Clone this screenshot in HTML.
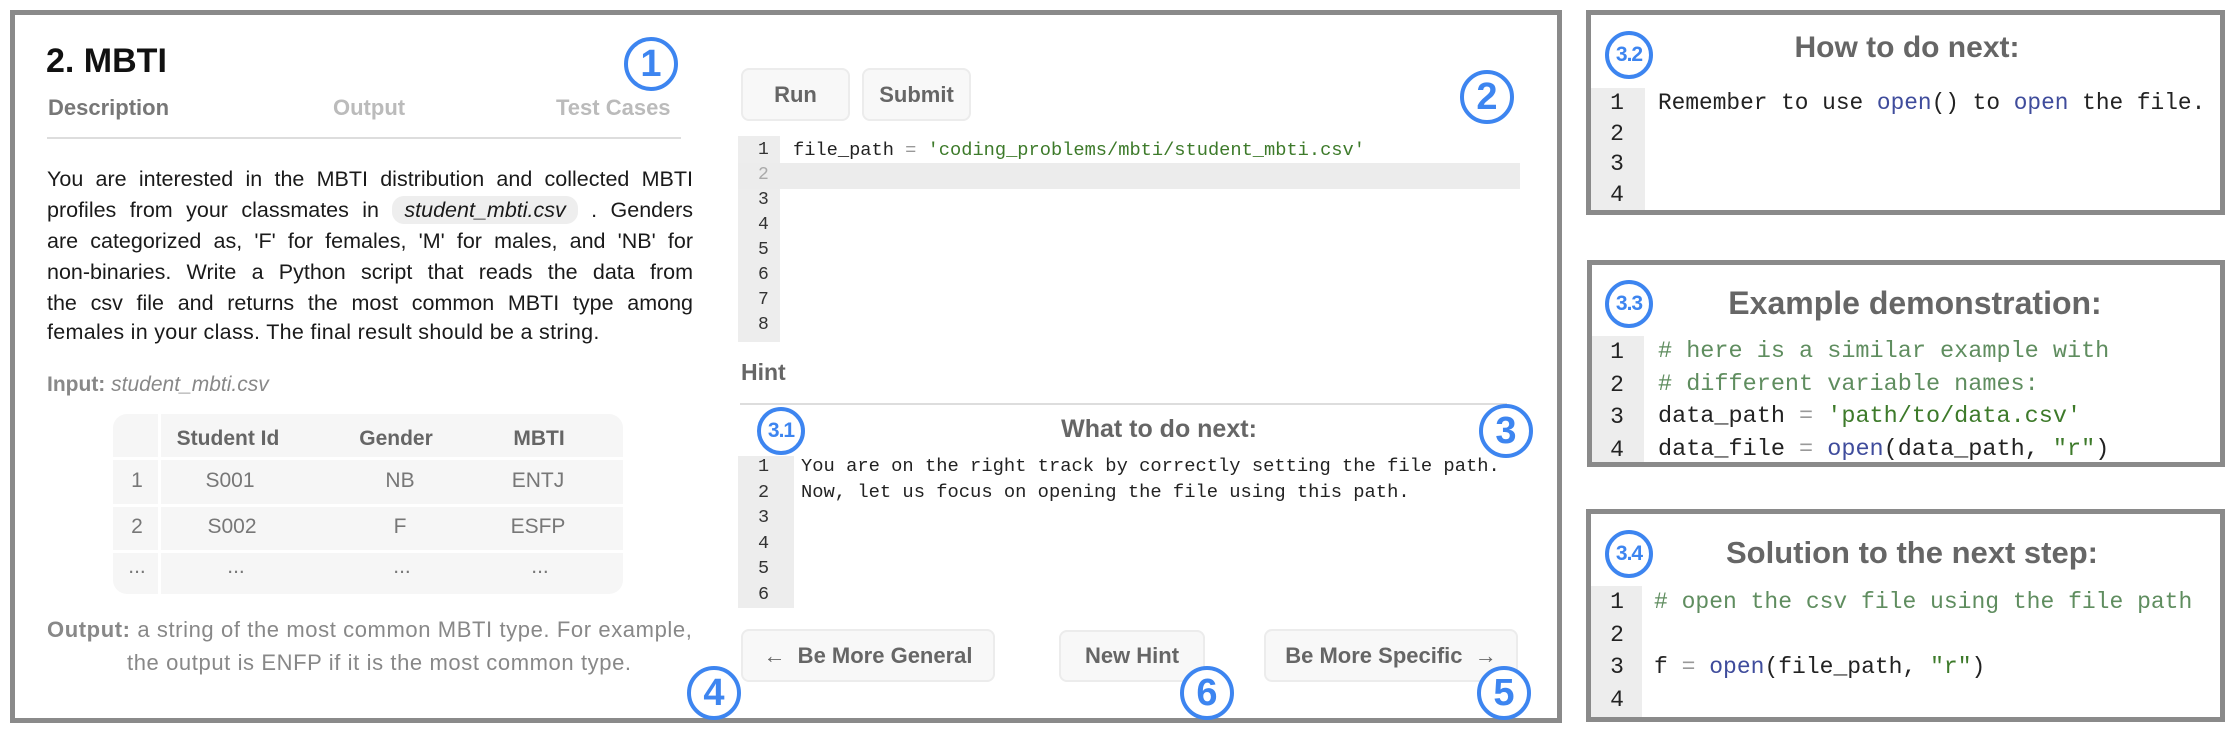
<!DOCTYPE html>
<html><head><meta charset="utf-8"><style>
*{margin:0;padding:0;box-sizing:border-box}
body{width:2240px;height:740px;background:#fff;position:relative;overflow:hidden;font-family:"Liberation Sans",sans-serif}
.a{position:absolute}
.box{position:absolute;border:5px solid #8a8a8a}
.c{position:absolute;border:4px solid #3d85f0;border-radius:50%;color:#3d85f0;font-weight:bold;display:flex;align-items:center;justify-content:center;background:transparent}
.big{width:54px;height:54px;font-size:38px}
.sm{width:48px;height:48px;font-size:21px;letter-spacing:-1px;background:#fff}
.p{position:absolute;left:47px;width:646px;font-size:21.5px;color:#1a1a1a;text-align:justify;text-align-last:justify;white-space:nowrap}
.btn{position:absolute;background:#f8f8f8;border:2px solid #ececec;border-radius:8px;color:#666;font-weight:bold;font-size:22px;display:flex;align-items:center;justify-content:center}
.gut{position:absolute;background:#ededed}
.ln{position:absolute;font-family:"Liberation Mono",monospace;color:#222}
.th{position:absolute;font-weight:bold;font-size:21px;color:#666;transform:translateX(-50%)}
.td{position:absolute;font-size:21px;color:#777;transform:translateX(-50%)}
.tt{position:absolute;font-weight:bold;color:#666;transform:translateX(-50%);white-space:nowrap}
.cm{color:#5f8d5f}.st{color:#3d7a2a}.kw{color:#3f4c9c}.op{color:#999}
</style></head><body>
<div class="box" style="left:10px;top:10px;width:1552px;height:713px"></div>

<div class="a" style="left:46px;top:42px;font-size:34px;font-weight:bold;color:#111">2. MBTI</div>
<div class="c big" style="left:624px;top:37px">1</div>
<div class="a" style="left:48px;top:95px;font-size:22px;font-weight:bold;color:#777">Description</div>
<div class="a" style="left:333px;top:95px;font-size:22px;font-weight:bold;color:#bbb">Output</div>
<div class="a" style="left:556px;top:95px;font-size:22px;font-weight:bold;color:#bbb">Test Cases</div>
<div class="a" style="left:47px;top:137px;width:634px;height:2px;background:#ddd"></div>

<div class="p" style="top:167px">You are interested in the MBTI distribution and collected MBTI</div>
<div class="p" style="top:198px">profiles from your classmates in <span style="background:#eee;border-radius:12px;padding:2px 12px;font-style:italic">student_mbti.csv</span> . Genders</div>
<div class="p" style="top:229px">are categorized as, 'F' for females, 'M' for males, and 'NB' for</div>
<div class="p" style="top:260px">non-binaries. Write a Python script that reads the data from</div>
<div class="p" style="top:291px">the csv file and returns the most common MBTI type among</div>
<div class="p" style="top:320px;text-align-last:left;letter-spacing:0.3px">females in your class. The final result should be a string.</div>

<div class="a" style="left:47px;top:373px;font-size:21px;color:#888"><b>Input:</b> <i>student_mbti.csv</i></div>
<div class="a" style="left:113px;top:414px;width:510px;height:180px;background:#f6f6f6;border-radius:14px;overflow:hidden">
 <div class="a" style="left:45px;top:0;width:3px;height:180px;background:#fff"></div>
 <div class="a" style="left:0;top:43px;width:510px;height:3px;background:#fff"></div>
 <div class="a" style="left:0;top:90px;width:510px;height:3px;background:#fff"></div>
 <div class="a" style="left:0;top:136px;width:510px;height:3px;background:#fff"></div>
</div>
<div class="th" style="left:228px;top:427px">Student Id</div>
<div class="th" style="left:396px;top:427px">Gender</div>
<div class="th" style="left:539px;top:427px">MBTI</div>
<div class="td" style="left:137px;top:469px">1</div><div class="td" style="left:230px;top:469px">S001</div><div class="td" style="left:400px;top:469px">NB</div><div class="td" style="left:538px;top:469px">ENTJ</div>
<div class="td" style="left:137px;top:515px">2</div><div class="td" style="left:232px;top:515px">S002</div><div class="td" style="left:400px;top:515px">F</div><div class="td" style="left:538px;top:515px">ESFP</div>
<div class="td" style="left:137px;top:555px">...</div><div class="td" style="left:236px;top:555px">...</div><div class="td" style="left:402px;top:555px">...</div><div class="td" style="left:540px;top:555px">...</div>
<div class="a" style="left:47px;top:617px;font-size:22px;letter-spacing:0.6px;color:#888"><b>Output:</b> a string of the most common MBTI type. For example,</div>
<div class="a" style="left:127px;top:650px;font-size:22px;letter-spacing:0.6px;color:#888">the output is ENFP if it is the most common type.</div>

<div class="btn" style="left:741px;top:68px;width:109px;height:53px">Run</div>
<div class="btn" style="left:862px;top:68px;width:109px;height:53px">Submit</div>
<div class="c big" style="left:1460px;top:70px">2</div>

<div class="gut" style="left:738px;top:136px;width:42px;height:206px"></div>
<div class="a" style="left:738px;top:163px;width:782px;height:26px;background:#ececec"></div>
<div class="ln" style="left:758px;top:138px;font-size:18px;line-height:25px;color:#333">1<br><span style="color:#aaa">2</span><br>3<br>4<br>5<br>6<br>7<br>8</div>
<div class="ln" style="left:793px;top:138px;font-size:18.7px;line-height:25px">file_path <span class="op">=</span> <span class="st">'coding_problems/mbti/student_mbti.csv'</span></div>

<div class="a" style="left:741px;top:359px;font-size:23px;font-weight:bold;color:#666">Hint</div>
<div class="a" style="left:740px;top:403px;width:767px;height:2px;background:#ddd"></div>
<div class="a" style="left:1159px;top:415px;transform:translateX(-50%);font-size:25px;font-weight:bold;color:#666;white-space:nowrap">What to do next:</div>
<div class="gut" style="left:738px;top:456px;width:56px;height:152px"></div>
<div class="ln" style="left:758px;top:454px;font-size:18.5px;line-height:25.5px;color:#333">1<br>2<br>3<br>4<br>5<br>6</div>
<div class="ln" style="left:801px;top:454px;font-size:18.8px;line-height:25.5px">You are on the right track by correctly setting the file path.<br>Now, let us focus on opening the file using this path.</div>
<div class="c sm" style="left:757px;top:407px">3.1</div>
<div class="c big" style="left:1479px;top:404px">3</div>

<div class="btn" style="left:741px;top:629px;width:254px;height:53px">←&nbsp; Be More General</div>
<div class="btn" style="left:1059px;top:630px;width:146px;height:52px">New Hint</div>
<div class="btn" style="left:1264px;top:629px;width:254px;height:53px">Be More Specific&nbsp; →</div>
<div class="c big" style="left:687px;top:666px;background:#fff">4</div>
<div class="c big" style="left:1180px;top:666px;background:#fff">6</div>
<div class="c big" style="left:1477px;top:666px;background:#fff">5</div>

<!-- right boxes -->
<div class="box" style="left:1586px;top:10px;width:639px;height:205px"></div>
<div class="c sm" style="left:1605px;top:31px">3.2</div>
<div class="tt" style="left:1907px;top:31px;font-size:30px">How to do next:</div>
<div class="gut" style="left:1591px;top:88px;width:54px;height:122px"></div>
<div class="ln" style="left:1617px;top:88px;font-size:23px;line-height:30.5px;transform:translateX(-50%)">1<br>2<br>3<br>4</div>
<div class="ln" style="left:1658px;top:88px;font-size:22.8px;line-height:30.5px">Remember to use <span class="kw">open</span>() to <span class="kw">open</span> the file.</div>

<div class="box" style="left:1587px;top:260px;width:638px;height:207px"></div>
<div class="c sm" style="left:1605px;top:280px">3.3</div>
<div class="tt" style="left:1915px;top:285px;font-size:32px">Example demonstration:</div>
<div class="gut" style="left:1592px;top:336px;width:52px;height:126px"></div>
<div class="ln" style="left:1617px;top:336px;font-size:23px;line-height:32.5px;transform:translateX(-50%)">1<br>2<br>3<br>4</div>
<div class="ln" style="left:1658px;top:336px;font-size:23.5px;line-height:32.5px"><span class="cm"># here is a similar example with</span><br><span class="cm"># different variable names:</span><br>data_path <span class="op">=</span> <span class="st">'path/to/data.csv'</span><br>data_file <span class="op">=</span> <span class="kw">open</span>(data_path, <span class="st">"r"</span>)</div>

<div class="box" style="left:1586px;top:509px;width:639px;height:213px"></div>
<div class="c sm" style="left:1605px;top:530px">3.4</div>
<div class="tt" style="left:1912px;top:535px;font-size:31px">Solution to the next step:</div>
<div class="gut" style="left:1591px;top:586px;width:51px;height:131px"></div>
<div class="ln" style="left:1617px;top:586px;font-size:23px;line-height:32.5px;transform:translateX(-50%)">1<br>2<br>3<br>4</div>
<div class="ln" style="left:1654px;top:586px;font-size:23px;line-height:32.5px"><span class="cm"># open the csv file using the file path</span><br>&nbsp;<br>f <span class="op">=</span> <span class="kw">open</span>(file_path, <span class="st">"r"</span>)</div>
</body></html>
